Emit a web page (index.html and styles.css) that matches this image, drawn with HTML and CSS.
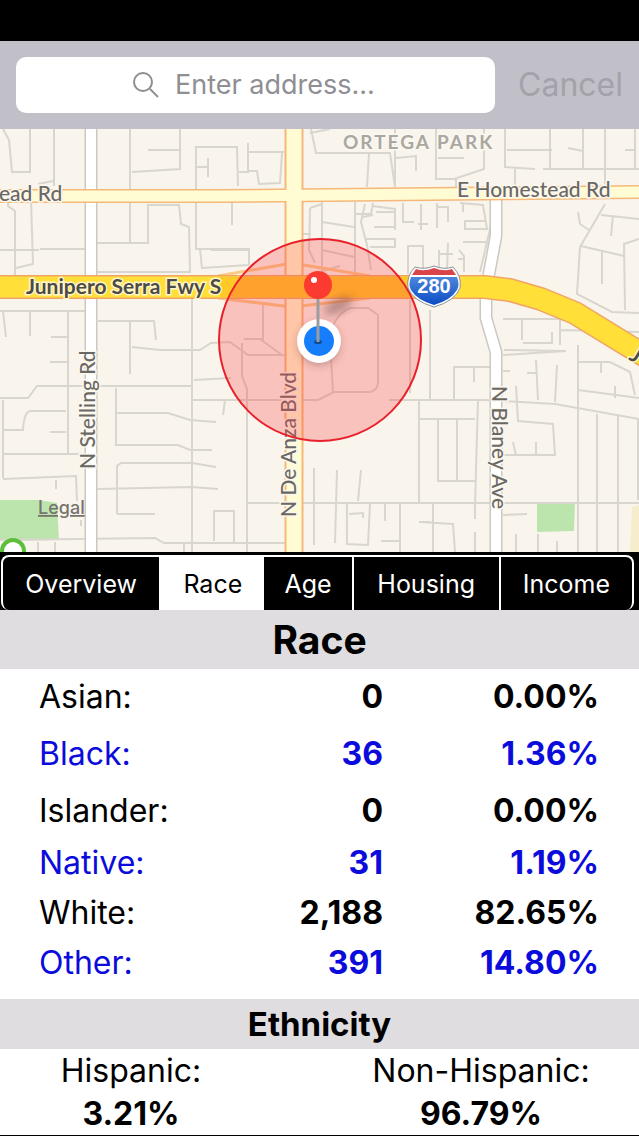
FILE: index.html
```
<!DOCTYPE html>
<html lang="en">
<head>
    <meta charset="UTF-8">
    <meta name="viewport" content="width=device-width, initial-scale=1.0">
    <title>Race</title>
    <link rel="stylesheet" href="styles.css">
</head>
<body>
    <header>
        <form class="search">
            <label class="search-field">
                <svg class="search-icon" viewBox="0 0 28 28" aria-hidden="true">
                    <circle cx="11" cy="11" r="9"/>
                    <path d="M18 18l8 8"/>
                </svg>
                <input type="text" placeholder="Enter address..." aria-label="Enter address">
            </label>
            <button type="button" class="cancel">Cancel</button>
        </form>
    </header>

    <main>
        <svg class="map" viewBox="0 129 639 423" role="img" aria-label="Map">
            <defs>
                <linearGradient id="shield" x1="0" y1="0" x2="0" y2="1">
                    <stop offset="0" stop-color="#4d86dc"/>
                    <stop offset="1" stop-color="#0b4cc4"/>
                </linearGradient>
                <filter id="soft" x="-50%" y="-50%" width="200%" height="200%">
                    <feGaussianBlur stdDeviation="5"/>
                </filter>
            </defs>

            <!-- parks -->
            <path class="park" d="M0 500L39 500L57 503L59 540L0 541zM537 504L575 502L574 531L537 532z"/>
            <path class="school" d="M632 507L639 505V552H630z"/>

            <!-- side streets -->
            <g class="streets">
                <path d="M3 129L9 140L12 172H30V129M54 129V186M38 184L53 181M8 200V206L15 211V275M31 200L33 264L16 268M40 249H85"/>
                <path d="M130 129V189M148 150H180M180 129V169L132 172M196 189V147H237L238 186M197 167H207M208 158V177"/>
                <path d="M130 202V244M97 243H148V205H179L181 224L189 227L190 272H97M196 202V249H249V265M200 249L202 268L249 265M232 203V225"/>
                <path d="M248 143V172H239M248 152H284M248 171H257L259 184L280 183L282 153M311 129L316 153H369L367 187M370 153H390L395 187M396 158L416 156V171M395 129V187M310 133L330 129M436 129V179H454L484 169V129M438 158H464"/>
                <path d="M505 129V167L535 169M507 150H552M550 129V168M568 148L583 151M583 129V168M605 129V186M543 169H639M625 150H635V129M635 150V169M515 169V185M456 179V187"/>
                <path d="M310 208L309 250L315 263M322 202V272M322 222L354 227M322 250L354 257M355 202V275M310 208L322 204M365 204L361 222L367 245L371 270M355 214H371L373 203M372 206L395 209V230M363 217L373 215M376 212H395M374 227H395M366 239H395V247H370M303 234H311M323 271L340 266"/>
                <path d="M403 203V222H414M421 204V230M437 203V228M437 207H448V222M428 224H418M460 203L483 205L487 229H465V221H485M463 204V212M448 243L447 271H439V250M464 272V256L459 250M463 242H487M458 259H465M408 274V246H423V276M440 254H453M480 272L491 225"/>
                <path d="M578 212L580 224L589 230M605 204L580 247L577 294L612 312L639 313M601 215L639 219M613 215L611 236M581 246L624 256M602 252V284M625 310L624 244L639 239"/>
                <path d="M0 311H85M3 311L6 337M30 311V336M68 311V455M51 337H68M98 321H154L156 340M130 322V374M192 299V552M263 303V339H244M260 339L282 355M0 250H39M211 250H250"/>
                <path d="M50 362H68M0 398H28L37 386H192M3 400V478M3 430H23Q24 411 31 411H66M50 432H66M3 454H85M3 479L76 476L77 501M56 480V489M97 489L192 487L218 489M116 388V445H178L190 450H212M117 413H168L190 420L216 422M132 347L160 350H200L211 343L230 342L248 355H285M194 380L231 378M192 400H212"/>
                <path d="M117 514V466L121 463H192L216 467M117 514H155M0 540L155 538L164 543H285M38 542V552M55 542V552M81 526V520M184 543V552M214 541V511H234V542M225 400L223 415M242 343V376L247 389V552M211 400H318L334 392H370Q378 390 378 382V315L368 308H350Q332 316 330 340L333 392"/>
                <path d="M248 503H639M314 468V545M337 470L335 543M361 470L358 501M347 504V544L368 545L370 504M349 514L363 513V518M385 504V521M381 541H400V552M400 503V552M430 522H419M419 400V503M389 400H484L555 404L639 419M410 300V393M430 310V400M420 419H475"/>
                <path d="M438 419V481H475M457 419V481M478 400L475 505L475 519M454 400V367H490M474 367V382M503 355L566 351L504 350M523 343H552V332M536 360L538 400M527 373H536M557 365L555 402M516 386L518 421L553 424L555 455H503M513 442L516 455M536 442V455M578 345V552M578 362H610L630 372L635 395M601 362V373M578 390L639 398M615 386V398M597 414V552M618 416V552M638 418V500"/>
                <path d="M503 515L527 514M420 522L453 524L455 552M475 532V552M433 504V552M516 534V552M538 534V552M557 541V552M503 319H560V345M522 319V340M560 330L639 332M503 371H510"/>
            </g>

            <!-- Stelling and Blaney -->
            <g class="road-edge">
                <path d="M91 129V552"/>
                <path d="M496 199V236L486 290V318L496 352V552"/>
            </g>
            <g class="road-fill">
                <path d="M91 129V552"/>
                <path d="M496 199V236L486 290V318L496 352V552"/>
            </g>

            <!-- freeway ramps -->
            <path class="ramp" d="M218 276L292 263L370 276M218 298L292 307L370 298"/>

            <!-- Homestead and De Anza -->
            <g class="avenue-edge">
                <path d="M0 196H220L430 194L639 192"/>
                <path class="wide" d="M294 129V552"/>
            </g>
            <g class="avenue-fill">
                <path d="M0 196H220L430 194L639 192"/>
                <path class="wide" d="M294 129V552"/>
            </g>

            <!-- I-280 -->
            <path class="freeway-edge" d="M-5 287H485L510 290L541 299L575 313L650 359"/>
            <path class="freeway" d="M-5 287H485L510 290L541 299L575 313L650 359"/>
            <path class="freeway-core" d="M220 287H418"/>

            <g class="labels">
                <text x="-1" y="201">ead Rd</text>
                <text x="457" y="197">E Homestead Rd</text>
                <text class="fwy" x="26" y="294">Junipero Serra Fwy S</text>
                <text class="fwy" transform="translate(628 359) rotate(32)">J</text>
                <text transform="translate(95 469) rotate(-90)">N Stelling Rd</text>
                <text transform="translate(296 517) rotate(-90)">N De Anza Blvd</text>
                <text transform="translate(492 386) rotate(90)">N Blaney Ave</text>
                <text class="area" x="343" y="149">ORTEGA PARK</text>
            </g>

            <a href="#legal"><text class="legal" x="38" y="514">Legal</text></a>

            <circle class="park-pin" cx="13" cy="551" r="11"/>

            <!-- search radius -->
            <circle class="radius" cx="320" cy="340" r="101"/>

            <g class="interstate">
                <path class="shield-base" d="M415 267Q424 270 434 266Q444 270 453 267Q462 276 460 288Q455 301 434 307Q413 301 408 288Q406 276 415 267z"/>
                <path class="shield-top" d="M416 269Q424 272 434 268Q444 272 452 269L456 275H412z"/>
                <path class="shield-body" d="M411 277H457Q460 285 457 290Q451 300 434 305Q417 300 411 290Q408 285 411 277z"/>
                <text x="434" y="293">280</text>
            </g>

            <!-- user position and dropped pin -->
            <ellipse class="blur" cx="338" cy="306" rx="16" ry="6" transform="rotate(-25 338 306)"/>
            <circle class="blur" cx="319" cy="344" r="20"/>
            <circle cx="319" cy="341" r="22" fill="#fff"/>
            <circle cx="319" cy="341" r="15" fill="#167efb"/>
            <ellipse cx="318" cy="342" rx="4" ry="2" fill="#124a8c"/>
            <path d="M318 296V342" stroke="#9a9ca0" stroke-width="3"/>
            <circle cx="318" cy="285" r="14" fill="#fc3b30"/>
            <circle cx="314" cy="280" r="3" fill="#fff"/>
        </svg>

        <nav class="tabs">
            <button type="button">Overview</button>
            <button type="button" class="active">Race</button>
            <button type="button">Age</button>
            <button type="button">Housing</button>
            <button type="button">Income</button>
        </nav>

        <h1>Race</h1>
        <table>
            <tbody>
                <tr class="tall"><th scope="row">Asian:</th><td>0</td><td>0.00%</td></tr>
                <tr class="taller"><th scope="row">Black:</th><td>36</td><td>1.36%</td></tr>
                <tr class="tall"><th scope="row">Islander:</th><td>0</td><td>0.00%</td></tr>
                <tr><th scope="row">Native:</th><td>31</td><td>1.19%</td></tr>
                <tr><th scope="row">White:</th><td>2,188</td><td>82.65%</td></tr>
                <tr><th scope="row">Other:</th><td>391</td><td>14.80%</td></tr>
            </tbody>
        </table>

        <h2>Ethnicity</h2>
        <dl class="ethnicity">
            <div>
                <dt>Hispanic:</dt>
                <dd>3.21%</dd>
            </div>
            <div>
                <dt>Non-Hispanic:</dt>
                <dd>96.79%</dd>
            </div>
        </dl>
    </main>
</body>
</html>
```
FILE: styles.css
```
* {
    box-sizing: border-box;
}

body {
    font-family: Inter, "Liberation Sans", sans-serif;
    margin: 0;
    background-color: #fff;
    color: #000;
}

button, input {
    font: inherit;
    border: 0;
    padding: 0;
    margin: 0;
    background: none;
}

header {
    border-top: 41px solid #000;
    background-color: #c1bfc8;
}

.search {
    display: flex;
    align-items: center;
    padding: 16px;
    gap: 23px;
}

.search-field {
    flex: 1;
    display: flex;
    align-items: center;
    justify-content: center;
    gap: 15px;
    height: 56px;
    border-radius: 10px;
    background-color: #fff;
}

.search-icon {
    width: 28px;
    height: 28px;
    fill: none;
    stroke: #8e8e93;
    stroke-width: 2;
}

.search-field input {
    width: 204px;
    height: 32px;
    padding-bottom: 2px;
    font-size: 27px;
    outline: none;
}

.search-field input::placeholder {
    color: #8e8e93;
    opacity: 1;
}

.cancel {
    padding-bottom: 2px;
    font-size: 32px;
    color: #a3a1a9;
}

.map {
    display: block;
    width: 100%;
    background-color: #f9f5ed;
    fill: none;
}

.map .park {
    fill: #bce5ae;
}

.map .school {
    fill: #f5edcb;
}

.streets {
    stroke: #d9d6cf;
    stroke-width: 2;
}

.road-edge {
    stroke: #cbc8c3;
    stroke-width: 13;
}

.road-fill {
    stroke: #fff;
    stroke-width: 10;
}

.ramp {
    stroke: #f8c987;
    stroke-width: 3;
}

.avenue-edge {
    stroke: #f5b87a;
    stroke-width: 14;
}

.avenue-fill {
    stroke: #fffbd2;
    stroke-width: 11;
}

.avenue-edge .wide {
    stroke-width: 19;
}

.avenue-fill .wide {
    stroke-width: 15;
}

.freeway-edge {
    stroke: #f0a566;
    stroke-width: 24;
    stroke-linejoin: round;
}

.freeway {
    stroke: #ffdf38;
    stroke-width: 21;
    stroke-linejoin: round;
}

.freeway-core {
    stroke: #ffca28;
    stroke-width: 20;
}

.labels text {
    font-family: Lato, sans-serif;
    font-size: 21px;
    font-weight: 500;
    fill: #6b6864;
    stroke: #fbf8f0;
    stroke-width: 3;
    paint-order: stroke;
}

.labels .fwy {
    font-weight: 700;
    fill: #4c4a42;
    stroke: #fff6cf;
}

.labels .area {
    font-size: 19px;
    font-weight: 700;
    letter-spacing: 2px;
    fill: #aaa7a3;
}

.map .legal {
    font-size: 18px;
    font-weight: 500;
    fill: #77736e;
    text-decoration: underline;
}

.park-pin {
    fill: #fff;
    stroke: #5bbf3a;
    stroke-width: 4;
}

.radius {
    fill: rgba(255, 60, 60, 0.28);
    stroke: #e8202a;
    stroke-width: 2;
}

.shield-base {
    fill: #fff;
    stroke: #8a8f99;
    stroke-width: 1;
}

.shield-top {
    fill: #d9434a;
}

.shield-body {
    fill: url(#shield);
}

.interstate text {
    font-family: "Liberation Sans", sans-serif;
    font-size: 20px;
    font-weight: 700;
    text-anchor: middle;
    fill: #fff;
}

.blur {
    fill: rgba(90, 50, 50, 0.45);
    filter: url(#soft);
}

.tabs {
    display: grid;
    grid-template-columns: 158fr 105fr 87fr 147fr 135fr;
    height: 58px;
    padding: 3px 5px 0 1px;
    background-color: #000;
}

.tabs button {
    border-top: 2px solid #fff;
    border-left: 2px solid #fff;
    font-size: 25px;
    color: #fff;
}

.tabs button:first-child {
    border-radius: 8px 0 0 8px;
}

.tabs button:last-child {
    border-right: 2px solid #fff;
    border-radius: 0 8px 8px 0;
}

.tabs .active {
    background-color: #fff;
    color: #000;
}

.tabs .active + button {
    border-left: 0;
}

h1, h2 {
    margin: 0;
    background-color: #dfdde0;
    text-align: center;
    font-weight: 700;
}

h1 {
    font-size: 39px;
    line-height: 59px;
}

h2 {
    font-size: 33px;
    line-height: 50px;
}

table {
    width: 100%;
    margin-bottom: 12px;
    border-collapse: collapse;
    table-layout: fixed;
    font-size: 32px;
}

tr {
    height: 50px;
}

.tall {
    height: 54px;
}

.taller {
    height: 60px;
}

tr:nth-child(even) {
    color: #0b0bdc;
}

th, td {
    padding: 0;
    text-align: right;
    font-weight: 700;
}

th {
    padding-left: 39px;
    text-align: left;
    font-weight: 400;
}

td:nth-child(2) {
    padding-right: 43px;
}

td:last-child {
    padding-right: 40px;
}

.ethnicity {
    display: grid;
    grid-template-columns: 262fr 316fr;
    column-gap: 61px;
    margin: 0;
    border-bottom: 1px solid #000;
    font-size: 32px;
    line-height: 43px;
    text-align: center;
}

.ethnicity dd {
    margin: 0;
    font-weight: 700;
}
```
